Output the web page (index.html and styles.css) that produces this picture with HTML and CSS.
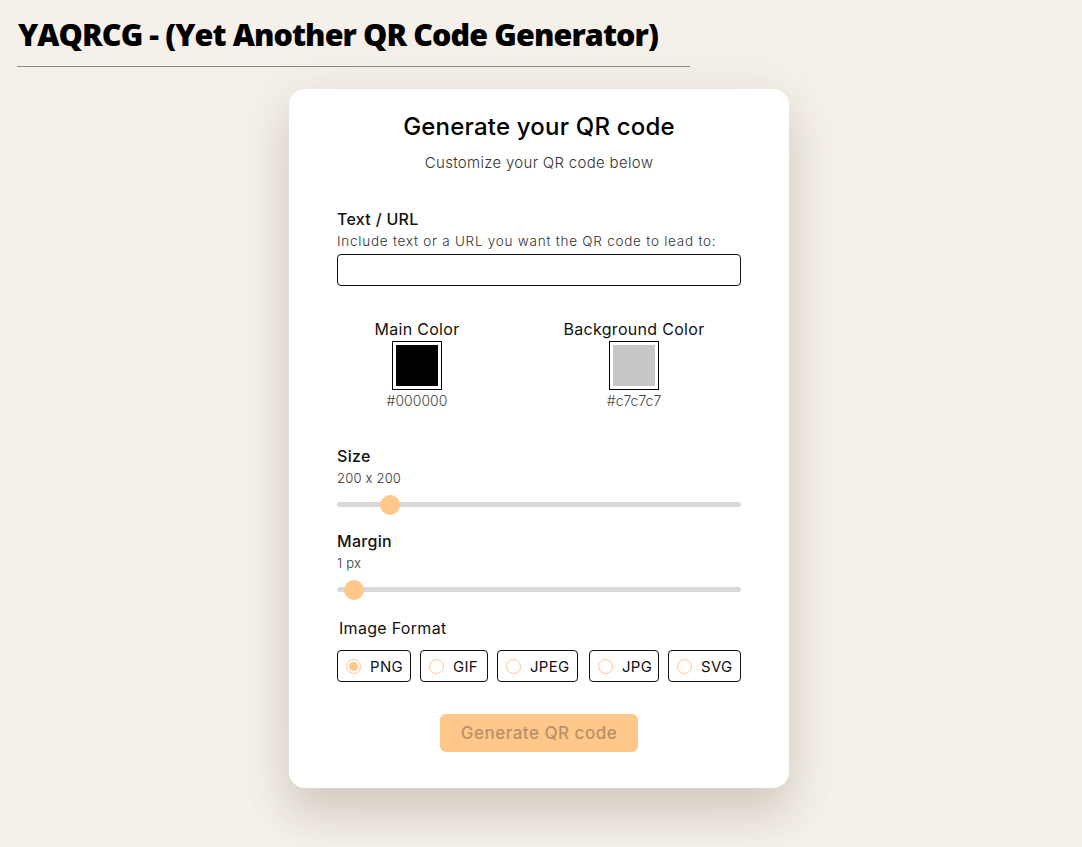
FILE: index.html
```html
<!DOCTYPE html>
<html>
<head>
<meta charset="utf-8">
<link rel="stylesheet" href="styles.css">
</head>
<body>
<header class="top">
  <h1 class="brand">YAQRCG - (Yet Another QR Code Generator)</h1>
</header>
<main class="stage">
  <form class="card">
    <h2 class="card-title">Generate your QR code</h2>
    <p class="card-sub">Customize your QR code below</p>

    <div class="field">
      <label class="label">Text / URL</label>
      <p class="hint">Include text or a URL you want the QR code to lead to:</p>
      <input class="text-input" type="text">
    </div>

    <div class="colors">
      <div class="color">
        <span class="color-label">Main Color</span>
        <span class="swatch"><span class="swatch-fill swatch-black"></span></span>
        <span class="hex">#000000</span>
      </div>
      <div class="color">
        <span class="color-label">Background Color</span>
        <span class="swatch"><span class="swatch-fill swatch-grey"></span></span>
        <span class="hex">#c7c7c7</span>
      </div>
    </div>

    <div class="field slider-field">
      <label class="label">Size</label>
      <p class="value">200 x 200</p>
      <div class="track"><span class="thumb thumb-size"></span></div>
    </div>

    <div class="field slider-field">
      <label class="label">Margin</label>
      <p class="value">1 px</p>
      <div class="track"><span class="thumb thumb-margin"></span></div>
    </div>

    <div class="field format">
      <span class="label format-label">Image Format</span>
      <div class="options">
        <span class="opt opt-png"><span class="radio checked"></span>PNG</span>
        <span class="opt opt-gif"><span class="radio"></span>GIF</span>
        <span class="opt opt-jpeg"><span class="radio"></span>JPEG</span>
        <span class="opt opt-jpg"><span class="radio"></span>JPG</span>
        <span class="opt opt-svg"><span class="radio"></span>SVG</span>
      </div>
    </div>

    <div class="actions">
      <button type="button" class="btn">Generate QR code</button>
    </div>
  </form>
</main>
</body>
</html>
```
FILE: styles.css
```css
* { box-sizing: border-box; }
html, body { margin: 0; padding: 0; }
body {
  background: #f5f0e9;
  font-family: Inter, "Noto Sans", sans-serif;
  font-feature-settings: "calt" 0;
  color: #111;
  min-height: 847px;
}
.top {
  padding: 14px 0 0 17px;
}
.brand {
  margin: 0;
  width: 673px;
  font-family: "Open Sans", sans-serif;
  font-weight: 800;
  font-size: 30.5px;
  letter-spacing: -0.9px;
  line-height: 40px;
  padding-left: 1px;
  padding-bottom: 12px;
  border-bottom: 1px solid #8a8a8a;
  color: #000;
}
.stage {
  display: flex;
  justify-content: center;
  padding-top: 22px;
}
.card {
  width: 500px;
  height: 699px;
  background: #fff;
  border-radius: 16px;
  box-shadow: 0 28px 40px rgba(120, 110, 90, 0.22), 0 4px 60px rgba(120, 110, 90, 0.10);
  padding: 24px 48px 0 48px;
  margin-left: -4px;
}
.card-title {
  margin: 0;
  text-align: center;
  font-size: 24px;
  font-weight: 500;
  letter-spacing: 0.2px;
  line-height: 28px;
  color: #000;
}
.card-sub {
  margin: 12px 0 0;
  text-align: center;
  font-size: 15px;
  font-weight: 300;
  letter-spacing: 0.3px;
  line-height: 20px;
  color: #333;
}
.field { margin-top: 36px; }
.label {
  display: block;
  font-size: 16px;
  font-weight: 500;
  letter-spacing: 0.3px;
  line-height: 20px;
  color: #111;
}
.hint {
  margin: 4px 0 0;
  font-size: 13.5px;
  font-weight: 300;
  letter-spacing: 0.75px;
  line-height: 17px;
  color: #333;
}
.text-input {
  display: block;
  margin-top: 4px;
  width: 404px;
  height: 32px;
  border: 1px solid #111;
  border-radius: 4px;
  background: #fff;
  font: inherit;
}
.colors {
  display: flex;
  margin-top: 33px;
}
.color {
  display: flex;
  flex-direction: column;
  align-items: center;
}
.color:first-child { width: 160px; }
.color:last-child { width: 160px; margin-left: 57px; }
.color-label {
  font-size: 16px;
  font-weight: 400;
  letter-spacing: 0.3px;
  line-height: 20px;
  color: #111;
}
.swatch {
  display: block;
  margin-top: 2px;
  width: 50px;
  height: 49px;
  border: 1px solid #000;
  padding: 3px;
  background: #fff;
}
.swatch-fill { display: block; width: 100%; height: 100%; }
.swatch-black { background: #000; }
.swatch-grey { background: #c7c7c7; }
.hex {
  margin-top: 2px;
  font-size: 14px;
  font-weight: 300;
  line-height: 18px;
  color: #444;
}
.slider-field { margin-top: 36px; }
.slider-field + .slider-field { margin-top: 24px; }
.value {
  margin: 3px 0 0;
  font-size: 13px;
  font-weight: 300;
  letter-spacing: 0.2px;
  line-height: 18px;
  color: #333;
}
.track {
  position: relative;
  margin-top: 15px;
  height: 5px;
  border-radius: 3px;
  background: #d9d9d9;
}
.slider-field + .slider-field .track { margin-top: 15px; }
.thumb {
  position: absolute;
  top: -7.5px;
  width: 20px;
  height: 20px;
  border-radius: 50%;
  background: #ffc78a;
}
.thumb-size { left: 43px; }
.thumb-margin { left: 7px; }
.format { margin-top: 26px; }
.format-label { padding-left: 2px; font-weight: 400; }
.options {
  display: flex;
  gap: 9px;
  margin-top: 12px;
}
.opt {
  display: flex;
  align-items: center;
  height: 32px;
  border: 1px solid #111;
  border-radius: 4px;
  padding: 0 8px;
  font-size: 15px;
  font-weight: 400;
  letter-spacing: 0.3px;
  color: #111;
  gap: 9px;
}
.opt-png { width: 74px; }
.opt-gif { width: 68px; }
.opt-jpeg { width: 81px; }
.opt-jpg { width: 70px; margin-left: 2px; }
.opt-svg { width: 73px; }
.radio {
  width: 15px;
  height: 15px;
  border-radius: 50%;
  border: 1px solid #ffc78a;
  flex: none;
  position: relative;
}
.radio.checked::after {
  content: "";
  position: absolute;
  left: 2px; top: 2px;
  width: 9px; height: 9px;
  border-radius: 50%;
  background: #ffc78a;
}
.actions {
  display: flex;
  justify-content: center;
  margin-top: 32px;
}
.btn {
  width: 198px;
  height: 38px;
  border: none;
  border-radius: 6px;
  background: #ffc78a;
  color: #b8916a;
  font-family: inherit;
  font-size: 17px;
  font-weight: 500;
  letter-spacing: 0.5px;
}
```
